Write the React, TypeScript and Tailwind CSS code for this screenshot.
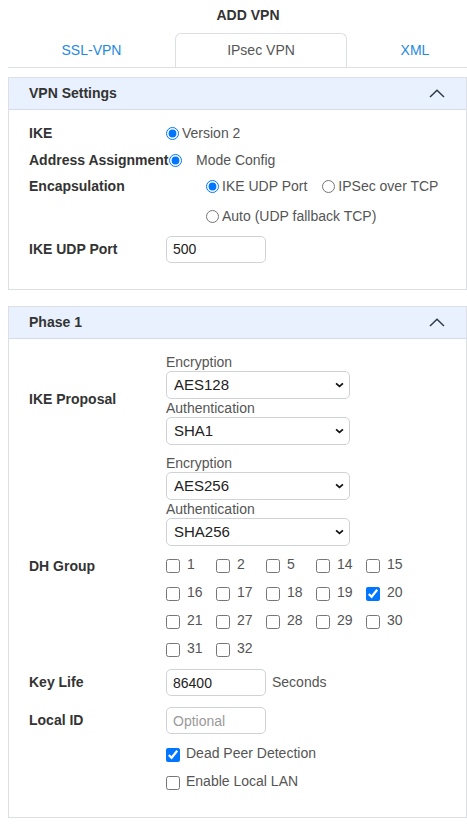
import type { ReactNode } from "react";

const dhGroups = [
  [1, 2, 5, 14, 15],
  [16, 17, 18, 19, 20],
  [21, 27, 28, 29, 30],
  [31, 32],
];

function ChevronUp() {
  return (
    <svg viewBox="0 0 16 9" className="h-[9px] w-[16px]" fill="none" stroke="#2f3a4a" strokeWidth="1.5">
      <path d="M1 8L8 1.2L15 8" />
    </svg>
  );
}

function Panel({ title, children }: { title: string; children: ReactNode }) {
  return (
    <section className="ml-[8px] w-[459px] border border-[#dcdfe4] bg-white">
      <header className="flex h-[32px] items-center justify-between border-b border-[#d3dcea] bg-[#e8f1fd] pl-[20px] pr-[21px]">
        <span className="text-[14px] font-bold text-[#333]">{title}</span>
        <ChevronUp />
      </header>
      {children}
    </section>
  );
}

function Label({ children }: { children: ReactNode }) {
  return <div className="w-[137px] shrink-0 whitespace-nowrap text-[14px] font-bold text-[#333]">{children}</div>;
}

function Select({ value }: { value: string }) {
  return (
    <div className="relative h-[28px] w-[184px]">
      <select
        defaultValue={value}
        className="h-full w-full appearance-none rounded-[5px] border border-[#cfd3d8] bg-white pl-[7px] text-[15px] text-[#222] outline-none"
      >
        <option>{value}</option>
      </select>
      <svg viewBox="0 0 10 7" className="pointer-events-none absolute right-[6px] top-[11px] h-[6px] w-[9px]" fill="none" stroke="#111" strokeWidth="2">
        <path d="M1 1.5L5 5.2L9 1.5" />
      </svg>
    </div>
  );
}

function TextBox({ value, placeholder }: { value?: string; placeholder?: string }) {
  return (
    <input
      defaultValue={value}
      placeholder={placeholder}
      className="h-[27px] w-[100px] rounded-[5px] border border-[#cfd3d8] px-[6px] text-[14px] text-[#222] outline-none placeholder:text-[#9a9a9a]"
    />
  );
}

function Radio({ checked, className = "" }: { checked?: boolean; className?: string }) {
  return (
    <input
      type="radio"
      defaultChecked={checked}
      className={`m-0 h-[13px] w-[13px] shrink-0 accent-[#0075ff] ${className}`}
    />
  );
}

function Check({ checked }: { checked?: boolean }) {
  return (
    <input type="checkbox" defaultChecked={checked} className="m-0 h-[14px] w-[14px] shrink-0 accent-[#0075ff]" />
  );
}

function ProposalGroup({ enc, auth }: { enc: string; auth: string }) {
  return (
    <div className="flex flex-col">
      <div className="h-[18px] text-[14px] leading-[18px] text-[#555]">Encryption</div>
      <Select value={enc} />
      <div className="h-[18px] text-[14px] leading-[18px] text-[#555]">Authentication</div>
      <Select value={auth} />
    </div>
  );
}

export default function App() {
  return (
    <div className="min-h-[824px] w-[467px] overflow-hidden bg-white font-['Liberation_Sans',Arial,sans-serif] text-[14px] text-[#555]">
      <h1 className="h-[30px] pl-[29px] text-center text-[14px] font-bold leading-[30px] text-[#333]">ADD VPN</h1>

      <nav className="ml-[8px] mt-[3px] flex h-[35px] border-b border-[#dcdfe4]">
        <button className="w-[167px] text-[14px] text-[#1f8ae0]">SSL-VPN</button>
        <button className="w-[172px] rounded-t-[6px] border border-b-0 border-[#dcdfe4] text-[14px] text-[#555]">IPsec VPN</button>
        <button className="flex-1 pl-[16px] text-[14px] text-[#1f8ae0]">XML</button>
      </nav>

      <div className="mt-[9px]">
        <Panel title="VPN Settings">
          <div className="pb-[26px] pl-[20px] pt-[10px]">
            <div className="flex h-[27px] items-center">
              <Label>IKE</Label>
              <Radio checked />
              <span className="ml-[3px]">Version 2</span>
            </div>
            <div className="flex h-[26px] items-center">
              <Label>Address Assignment</Label>
              <Radio checked className="ml-[3px]" />
              <span className="ml-[14px]">Mode Config</span>
            </div>
            <div className="flex h-[26px] items-center">
              <Label>Encapsulation</Label>
              <div className="flex items-center pl-[40px]">
                <Radio checked />
                <span className="ml-[3px]">IKE UDP Port</span>
                <Radio className="ml-[15px]" />
                <span className="ml-[3px]">IPSec over TCP</span>
              </div>
            </div>
            <div className="mt-[4px] flex h-[26px] items-center">
              <div className="w-[137px] shrink-0" />
              <div className="flex items-center pl-[40px]">
                <Radio />
                <span className="ml-[3px]">Auto (UDP fallback TCP)</span>
              </div>
            </div>
            <div className="mt-[6px] flex h-[28px] items-center">
              <Label>IKE UDP Port</Label>
              <TextBox value="500" />
            </div>
          </div>
        </Panel>
      </div>

      <div className="mt-[16px]">
        <Panel title="Phase 1">
          <div className="pb-[20px] pl-[20px] pt-[14px]">
            <div className="flex items-center">
              <Label>IKE Proposal</Label>
              <ProposalGroup enc="AES128" auth="SHA1" />
            </div>
            <div className="mt-[9px] flex">
              <div className="w-[137px] shrink-0" />
              <ProposalGroup enc="AES256" auth="SHA256" />
            </div>

            <div className="mt-[6px] flex">
              <div className="flex h-[28px] w-[137px] shrink-0 items-center">
                <Label>DH Group</Label>
              </div>
              <div className="flex flex-col">
                {dhGroups.map((row, i) => (
                  <div key={i} className="flex h-[28px] items-center">
                    {row.map((n) => (
                      <label key={n} className="flex w-[50px] items-center">
                        <Check checked={n === 20} />
                        <span className="mb-[4px] ml-[7px]">{n}</span>
                      </label>
                    ))}
                  </div>
                ))}
              </div>
            </div>

            <div className="mt-[5px] flex h-[27px] items-center">
              <Label>Key Life</Label>
              <TextBox value="86400" />
              <span className="ml-[6px]">Seconds</span>
            </div>
            <div className="mt-[11px] flex h-[27px] items-center">
              <Label>Local ID</Label>
              <TextBox placeholder="Optional" />
            </div>
            <div className="mt-[7px] flex h-[28px] items-center">
              <div className="w-[137px] shrink-0" />
              <Check checked />
              <span className="mb-[4px] ml-[6px]">Dead Peer Detection</span>
            </div>
            <div className="flex h-[28px] items-center">
              <div className="w-[137px] shrink-0" />
              <Check />
              <span className="mb-[4px] ml-[6px]">Enable Local LAN</span>
            </div>
          </div>
        </Panel>
      </div>
    </div>
  );
}
